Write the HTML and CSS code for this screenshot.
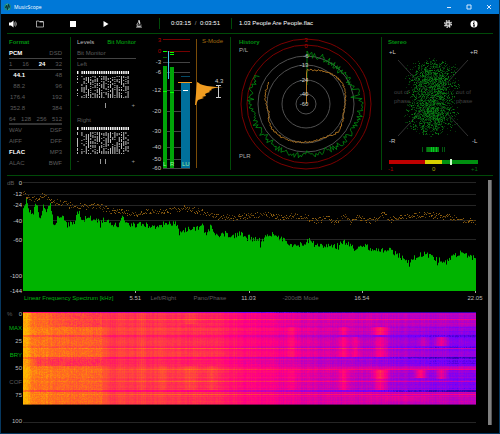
FILE: index.html
```html
<!DOCTYPE html>
<html lang="en">
<head>
  <meta charset="UTF-8" />
  <meta name="viewport" content="width=device-width, initial-scale=1.0" />
  <title>MusicScope</title>
  <link rel="stylesheet" href="styles.css">
</head>
<body>
  <header class="titlebar">
    <svg class="app-icon" width="7" height="8" viewBox="0 0 14 16">
      <circle cx="7" cy="8" r="7" fill="#178a8a"/>
      <path d="M3 10l2-5 2 8 2-10 2 6" fill="none" stroke="#0c2c30" stroke-width="2"/>
      <path d="M5 3l2-1M9 13l2-1" stroke="#8fd08f" stroke-width="1.5"/>
    </svg>
    <span class="app-name">MusicScope</span>
    <button class="win-btn" aria-label="Minimize"><svg width="6" height="6" viewBox="0 0 6 6"><path d="M1 3.5h4"/></svg></button>
    <button class="win-btn" aria-label="Maximize"><svg width="6" height="6" viewBox="0 0 6 6"><path d="M1 1h4v4h-4z"/></svg></button>
    <button class="win-btn" aria-label="Close"><svg width="6" height="6" viewBox="0 0 6 6"><path d="M1 1l4 4M5 1l-4 4"/></svg></button>
  </header>

  <nav class="toolbar">
    <button class="tool first" aria-label="Volume">
      <svg width="8" height="8" viewBox="0 0 16 16"><path d="M0 5h4l5-4v14l-5-4h-4z" fill="#fff"/><path d="M11 5q2 3 0 6M13 3q3.500 5 0 10" fill="none" stroke="#ccc" stroke-width="1.500"/></svg>
    </button>
    <button class="tool" aria-label="Open">
      <svg width="8" height="8" viewBox="0 0 16 16"><path d="M1 14V2h5l1 2h8v10z" fill="none" stroke="#ccc" stroke-width="1.500"/><path d="M7 2h8v2H8z" fill="#ccc"/></svg>
    </button>
    <button class="tool" aria-label="Stop">
      <svg width="8" height="8" viewBox="0 0 16 16"><path d="M2 2h12v12H2z" fill="#fff"/></svg>
    </button>
    <button class="tool" aria-label="Play">
      <svg width="8" height="8" viewBox="0 0 16 16"><path d="M3 2l10 6-10 6z" fill="#fff"/></svg>
    </button>
    <button class="tool" aria-label="Analyze">
      <svg width="8" height="8" viewBox="0 0 16 16"><path d="M6 1l3-1 2 7-3 1zM2 15q0-2 2-2h8q2 0 2 2z" fill="#ddd"/><path d="M6 5q-4 4-1 8h5q3-1 2-4M4 10h6" fill="none" stroke="#ccc" stroke-width="1.500"/></svg>
    </button>
    <div class="time"><span>0:03:15</span><span class="slash">/</span><span>0:03:51</span></div>
    <div class="track">1.03 People Are People.flac</div>
    <button class="tool right" aria-label="Settings">
      <svg width="8" height="8" viewBox="0 0 16 16"><circle cx="8" cy="8" r="6.500" fill="none" stroke="#ddd" stroke-width="3" stroke-dasharray="3 2.100"/><circle cx="8" cy="8" r="4" fill="#666" stroke="#ddd" stroke-width="2.500"/></svg>
    </button>
    <button class="tool right" aria-label="Info">
      <svg width="8" height="8" viewBox="0 0 16 16"><circle cx="8" cy="8" r="7" fill="#fff"/><path d="M8 3v2.500M6 7h2v5M6 12h4" fill="none" stroke="#000" stroke-width="2"/></svg>
    </button>
  </nav>

  <section class="panels">
    <div class="panel format">
      <h2>Format</h2>
      <div class="row ruled"><button class="on">PCM</button><button>DSD</button></div>
      <div class="row ruled"><button>1</button><button>16</button><button class="on">24</button><button>32</button></div>
      <div class="row rate"><button class="on">44.1</button><button>48</button></div>
      <div class="row rate"><button>88.2</button><button>96</button></div>
      <div class="row rate"><button>176.4</button><button>192</button></div>
      <div class="row rate"><button>352.8</button><button>384</button></div>
      <div class="row ruled thick"><button>64</button><button>128</button><button>256</button><button>512</button></div>
      <div class="row"><button>WAV</button><button>DSF</button></div>
      <div class="row"><button>AIFF</button><button>DFF</button></div>
      <div class="row"><button class="on">FLAC</button><button>MP3</button></div>
      <div class="row"><button>ALAC</button><button>BWF</button></div>
    </div>

    <div class="panel levels">
      <div class="tabs"><button>Levels</button><button class="active">Bit Monitor</button></div>
      <div class="row ruled">Bit Monitor</div>
      <div class="row">Left</div>
      <svg class="bits" id="bitsLeft" width="54" height="30" viewBox="0 0 54 30"></svg>
      <div class="row marks"><span>-</span><svg width="12" height="5" viewBox="0 0 12 5"><path d="M6.500 0v5"/></svg><span>+</span></div>
      <div class="row second">Right</div>
      <svg class="bits" id="bitsRight" width="54" height="30" viewBox="0 0 54 30"></svg>
      <div class="row marks"><span>-</span><svg width="12" height="5" viewBox="0 0 12 5"><path d="M1.500 0v5M6.500 0v5"/></svg><span>+</span></div>
    </div>

    <div class="panel meters">
      <svg class="plot" viewBox="0 0 83 138">
        <g class="scale end">
          <text class="red" x="14" y="8">3</text><text class="red" x="14" y="19">0</text>
          <text x="14" y="30">-3</text><text x="14" y="40">-6</text><text x="14" y="58">-12</text><text x="14" y="79">-20</text>
          <text x="14" y="99">-30</text><text x="14" y="115">-40</text><text x="14" y="127">-50</text><text x="14" y="136">-60</text>
        </g>
        <path d="M16 5.500h27M16 17.500h27" stroke="#700"/>
        <path d="M16 28.500h27M16 38.500h27M16 56.500h27M16 77.500h27M16 97.500h27M16 113.500h27M16 125.500h27M16 134.500h27" stroke="#444"/>
        <path d="M16 32h4v102h-4zM23 33h4v101h-4z" fill="#00a408"/>
        <path d="M16 57.500h4M23 58.500h4M16 17.500h4M23 18.500h4M23 20.500h4" stroke="#0f0"/>
        <path d="M16 23.500h4" stroke="#060"/>
        <path d="M21.500 17v28" stroke="#4ac4f0"/>
        <path d="M34 49h9v85h-9z" fill="#00709c"/>
        <path d="M34 42.500h9" stroke="#044a66"/>
        <path d="M31 48.500h14" stroke="#f09a20"/>
        <path d="M36 56.500h5" stroke="#fff"/>
        <g class="foot"><text x="16" y="132">L</text><text x="23" y="132">R</text><text x="35" y="132">LU</text></g>
        <path d="M49.500 5v129" stroke="#7a4c08"/>
        <path d="M50 48l2 1 1 1 3 1 4 1 9 1h7l-8 1-4 1 1 1-3 1 1 1-3 1-2 1 1 2-4 1 2 1-3 1-3 1-1 2-1 3h-1z" fill="#f09c20"/>
        <path d="M69 51.500h5M71.500 51v12M69 63.500h5" stroke="#ccc" fill="none"/>
        <text class="value" x="68" y="49">4.3</text>
      </svg>
      <button class="mode">S-Mode</button>
    </div>

    <div class="panel history">
      <svg class="plot" viewBox="0 0 150 138">
        <g fill="none" stroke="#7c0000"><circle cx="75" cy="69" r="65"/><circle cx="75" cy="69" r="59"/></g>
        <g fill="none" stroke="#505050"><circle cx="75" cy="69" r="48"/><circle cx="75" cy="69" r="39"/><circle cx="75" cy="69" r="24"/><circle cx="75" cy="69" r="10"/></g>
        <path id="peakTrace" fill="none" stroke="#009010"/>
        <path id="loudTrace" fill="none" stroke="#b07420"/>
        <g class="scale mid">
          <text class="red" x="75" y="7">3</text><text class="red" x="75" y="13">0</text>
          <text x="75" y="23">-6</text><text x="73" y="32">-13</text><text x="73" y="47">-24</text><text x="73" y="61">-40</text><text x="73" y="71">-60</text>
        </g>
      </svg>
      <div class="corner"><h2>History</h2><button>P/L</button><button class="low">PLR</button></div>
    </div>

    <div class="panel stereo">
      <h2>Stereo</h2>
      <svg class="plot" viewBox="0 0 111 126">
        <path d="M16 12l70 76M86 12l-70 76" stroke="#333"/>
        <g id="cloud" shape-rendering="crispEdges"></g>
        <g class="scale"><text x="7" y="6">+L</text><text x="88" y="6">+R</text><text x="7" y="95">-R</text><text x="90" y="95">-L</text></g>
        <g class="faint"><text x="12" y="46">out of</text><text x="12" y="55">phase</text><text x="74" y="46">out of</text><text x="74" y="55">phase</text></g>
        <path d="M40.500 99v5M44.500 99v5M60.500 99v5M62.500 99v5" stroke="#005a10"/>
        <path d="M45 99h12v5h-12z" fill="#078010"/><path d="M49.500 99v5M51.500 99v5M54.500 99v5" stroke="#0c2"/>
        <path d="M7 112h36v4h-36z" fill="#c00000"/><path d="M43 112h17v4h-17z" fill="#d8d000"/><path d="M60 112h36v4h-36z" fill="#009010"/>
        <path d="M68 111h2v6h-2z" fill="#cfc"/>
        <text class="red" x="6" y="123">-1</text><text class="yellow" x="50" y="123">0</text><text class="green" x="89" y="123">+1</text>
      </svg>
    </div>
  </section>

  <main class="analysis">
    <div class="charts">
      <section class="spectrum">
        <svg class="axis" width="16" height="114" viewBox="0 0 16 114">
          <text class="dim" x="0" y="5">dB</text>
          <g class="scale end"><text x="15" y="5">0</text><text x="15" y="16">-12</text><text x="15" y="27">-24</text><text x="15" y="43">-40</text><text x="15" y="62">-60</text><text x="15" y="98">-100</text><text x="15" y="113">-144</text></g>
        </svg>
        <div class="field">
          <canvas id="spectrum" height="113"></canvas>
          <div class="freq">
            <button class="active">Linear Frequency Spectrum [kHz]</button><span>5.51</span>
            <button>Left/Right</button><button>Pano/Phase</button><span>11.03</span>
            <button class="db">-200dB Mode</button><span>16.54</span><i></i><span>22.05</span>
          </div>
        </div>
      </section>
      <section class="spectrogram">
        <div class="axis">
          <div class="percent">
            <div class="zero"><span class="dim">%</span><span>0</span></div>
            <button class="active">MAX</button><span>25</span><button class="active">BRY</button><span>50</span><button>COF</button><span>75</span>
          </div>
          <span>100</span>
        </div>
        <div class="field"><canvas id="spectrogram" height="112"></canvas></div>
      </section>
    </div>
    <div class="scrollbar"></div>
  </main>
  <script src="script.js"></script>
</body>
</html>
```

FILE: styles.css
```css
* { box-sizing: border-box; }
body { margin: 0; min-height: 100vh; background-color: #000; color: #bbb; font: 6px/11px "Liberation Sans", Arial, sans-serif; border: 1px solid #07385f; border-top: 0; }
h2 { margin: 0; font-size: 6px; line-height: 11px; color: #009010; }
button { background: none; border: 0; padding: 0; margin: 0; font: inherit; color: #5c5c5c; text-align: left; cursor: pointer; white-space: nowrap; }
svg, canvas { display: block; }
svg text { font-size: 6px; fill: #ccc; }

.titlebar { display: flex; align-items: center; height: 14px; background-color: #0078d7; padding-left: 3px; }
.app-name { flex: 1; margin-left: 3px; color: #fff; font-family: "Open Sans", sans-serif; font-size: 5px; }
.win-btn { width: 20px; display: flex; justify-content: center; }
.win-btn svg { fill: none; stroke: #d8eaff; stroke-width: 1; }

.toolbar { display: flex; align-items: center; height: 20px; margin: 0 6px; padding-right: 6px; border-bottom: 1px solid #004a08; }
.tool { display: flex; justify-content: center; width: 33px; }
.tool.first { width: 16px; justify-content: flex-start; padding-left: 2px; }
.tool.right { width: 26px; }
.time { display: flex; justify-content: space-between; width: 73px; padding: 0 11px; margin-left: 4px; border: 1px solid #004a08; border-width: 0 1px; color: #fff; }
.time .slash { color: #999; }
.track { flex: 1; padding-left: 7px; color: #fff; }

.panels { display: grid; grid-template-columns: 63fr 77fr 83fr 151fr 112fr; height: 142px; margin: 0 6px; padding: 3px 0 5px; border-bottom: 1px solid #004a08; }
.panel { min-width: 0; height: 133px; }
.levels, .history, .stereo { border-left: 1px solid #004a08; }
.row { display: flex; justify-content: space-between; height: 11px; line-height: 11px; color: #5c5c5c; }
.row.ruled { border-bottom: 1px solid #444; }
.row.thick { border-bottom: 2px solid #333; }
.on { color: #fff; font-weight: bold; }
.format { padding: 0 8px 0 2px; }
.format h2, .tabs { height: 11px; }
.format .rate button { width: 16px; text-align: right; }
.levels { padding: 0 11px 0 6px; }
.tabs { display: flex; justify-content: space-between; }
.tabs button { color: #bbb; }
.tabs .active, .active { color: #00b410; }
.marks { width: 58px; align-items: center; color: #999; }
.marks svg { stroke: #999; }
.second { margin-top: 4px; }

.meters, .history { display: grid; }
.plot { width: 100%; grid-area: 1 / 1; overflow: visible; }
.meters .plot { margin-top: -3px; }
.history .plot { margin-top: -2px; }
.mode { grid-area: 1 / 1; justify-self: end; align-self: start; margin-right: 7px; line-height: 9px; color: #a46c10; z-index: 1; }
.corner { grid-area: 1 / 1; display: flex; flex-direction: column; align-items: flex-start; padding-left: 8px; z-index: 1; }
.corner button { color: #aaa; line-height: 5px; }
.corner .low { margin-top: 101px; }
.stereo h2 { padding-left: 6px; }
.scale.end { text-anchor: end; }
.scale.mid { text-anchor: middle; }
svg .foot text { fill: #9df09d; }
svg text.red { fill: #b00000; }
svg text.yellow { fill: #b0a800; }
svg text.green { fill: #007010; }
svg .faint text { fill: #404040; }
svg text.dim, .dim { fill: #5c5c5c; color: #5c5c5c; }

.analysis { display: flex; margin: 4px 7px 4px 6px; gap: 3px; }
.charts { flex: 1; }
.scrollbar { width: 4px; background-color: #808080; border: 1px solid #555; border-width: 0 1px 0 0; }
.spectrum, .spectrogram { display: flex; }
.field { flex: 1; min-width: 0; }
.field canvas { width: calc(100% - 9px); }
.freq { display: grid; grid-template-columns: 102fr 20fr 36fr 57fr 20fr 93fr 20fr 93fr 20fr; line-height: 11px; white-space: nowrap; text-align: center; }
.freq button { text-align: center; }
.freq .active { text-align: left; padding-left: 1px; }
.freq .db { text-align: left; padding-left: 24px; }
.spectrogram { margin-top: 8px; }
.spectrogram .axis { width: 16px; padding-right: 1px; text-align: right; line-height: 8px; margin-top: -2px; }
.percent { display: flex; flex-direction: column; justify-content: space-between; height: 89px; margin-bottom: 18px; }
.percent button { text-align: right; line-height: 8px; }
.zero { display: flex; justify-content: space-between; }
```

FILE: script.js
```js
let seed = 7;
function rnd() {
  seed = (seed * 16807) % 2147483647;
  return seed / 2147483647;
}

// linear interpolation through [x, y] pairs
function curve(pts, x) {
  for (let i = 1; i < pts.length; i++) {
    if (x <= pts[i][0]) {
      const [x0, y0] = pts[i - 1], [x1, y1] = pts[i];
      return y0 + (y1 - y0) * (x - x0) / (x1 - x0);
    }
  }
  return pts[pts.length - 1][1];
}

function drawBits(id) {
  let head = '', body = '';
  for (let c = 0; c < 24; c++) {
    const x = c * 2.2;
    if (c === 1) continue;
    head += `M${x} 1h1.4v3h-1.4z`;
    for (let y = 6; y < 28; y += 1) {
      if (rnd() < (c < 4 ? 0.5 : 0.66)) body += `M${x} ${y}h1v1h-1z`;
    }
  }
  document.getElementById(id).innerHTML = `<path d="${head}" fill="#fff"/><path d="${body}" fill="#bbb"/>`;
}

function trace(id, pts, noise, start) {
  let d = start;
  for (let a = pts[0][0]; a <= 301; a += 1.5) {
    const r = curve(pts, a) + (rnd() - 0.5) * noise;
    const t = a * Math.PI / 180;
    d += `L${(75 + r * Math.sin(t)).toFixed(1)} ${(69 - r * Math.cos(t)).toFixed(1)}`;
  }
  const el = document.getElementById(id);
  el.setAttribute('d', d);
  el.setAttribute('stroke-width', noise > 3 ? 0.8 : 1);
}

function drawCloud() {
  const paths = ['', '', ''];
  for (let i = 0; i < 3400; i++) {
    const g = (rnd() + rnd() + rnd() - 1.5);
    const h = (rnd() + rnd() - 1);
    const lobe = rnd() < 0.5 ? -1 : 1;
    const x = 50 + g * 21;
    const y = 49 + lobe * 17 + h * 23 + lobe * Math.abs(g) * -3;
    paths[i % 3] += `M${Math.round(x)} ${Math.round(y)}h1v1h-1z`;
  }
  document.getElementById('cloud').innerHTML =
    `<path d="${paths[0]}" fill="#03300a"/><path d="${paths[1]}" fill="#05480c"/><path d="${paths[2].slice(0, 7000)}" fill="#087812"/>`;
}

const LEVEL = [[0,28],[3,19],[6,30],[9,31],[13,23],[17,39],[20,25],[24,30],[27,21],[30,43],[34,38],[39,36],[44,44],[52,40],[55,30],[59,41],[62,35],[74,40],[84,39],[94,46],[99,37],[104,42],[111,44],[117,43],[127,45],[132,48],[137,43],[147,41],[152,43],[157,51],[164,48],[171,48],[179,44],[183,54],[187,46],[194,56],[202,48],[207,56],[217,53],[227,57],[236,59],[244,56],[249,53],[257,57],[267,64],[277,63],[286,60],[294,65],[311,66],[322,61],[331,68],[341,65],[354,70],[364,68],[374,74],[386,81],[394,75],[401,72],[411,78],[419,80],[424,81],[431,75],[437,72],[444,75],[453,78]];
const PEAK = [[0,11],[7,18],[14,18],[20,14],[27,19],[34,21],[44,23],[52,26],[64,24],[77,25],[87,30],[101,30],[114,33],[127,30],[144,30],[159,26],[177,31],[194,35],[211,36],[227,34],[247,33],[257,36],[269,34],[284,36],[294,40],[302,35],[311,41],[321,34],[327,42],[334,36],[344,39],[351,38],[359,33],[367,38],[381,35],[394,34],[407,33],[427,36],[441,39],[453,40]];

function drawSpectrum() {
  const cv = document.getElementById('spectrum');
  const w = cv.width = cv.clientWidth;
  const ctx = cv.getContext('2d');
  ctx.fillStyle = '#252525';
  [2, 14, 25, 40, 59].forEach(y => ctx.fillRect(0, y, w, 1));
  for (let x = 0; x < w; x++) {
    const p = x * 453 / w;
    let y = curve(LEVEL, p) + 1 + (rnd() - 0.5) * 6;
    if (rnd() < 0.07) y += 7 * rnd();
    ctx.fillStyle = '#00b400';
    ctx.fillRect(x, y, 1, 111 - y);
    ctx.fillStyle = rnd() < 0.5 ? '#8a5c10' : '#5c3c08';
    ctx.fillRect(x, Math.round(curve(PEAK, p) + 1 + (rnd() - 0.5) * 5), 1, 1);
    if (rnd() < 0.4) ctx.fillRect(x, Math.round(curve(PEAK, p) + 1 + (rnd() - 0.5) * 7), 1, 1);
  }
  ctx.fillStyle = '#aaa';
  [0.25, 0.5, 0.75, 1].forEach(k => ctx.fillRect(Math.round(w * k) - 1, 111, 1, 2));
}

const STOPS = [[0,[50,0,170]],[0.1,[110,0,255]],[0.2,[155,0,220]],[0.33,[210,0,170]],[0.45,[255,0,130]],[0.56,[255,30,95]],[0.68,[255,70,60]],[0.82,[255,115,25]],[1,[255,185,0]]];
function heat(v) {
  v = Math.max(0, Math.min(1, v));
  return [0, 1, 2].map(k => curve(STOPS.map(s => [s[0], s[1][k]]), v));
}

const BASE = [[0,0.97],[4,0.95],[8,0.83],[40,0.77],[76,0.75],[86,0.64],[150,0.61],[190,0.58],[220,0.47],[250,0.42],[300,0.32],[350,0.26],[390,0.19],[453,0.13]];
// [first row, last row, offset]
const BANDS = [[0,0,-0.35],[1,14,-0.01],[15,22,0.03],[23,24,-0.12],[25,33,0],[34,35,-0.06],[36,44,0.02],[45,46,-0.13],[47,53,-0.04],[54,57,0],[58,65,0.04],[66,77,0],[78,79,-0.13],[80,91,0.03]];
// [x, half width, first row, last row, gain]
const SPOTS = [[166,6,1,11,0.08],[166,7,54,77,0.09],[188,5,54,77,0.07],[118,4,1,77,0.04],[140,4,54,77,0.05],[268,4,15,44,0.1],[268,4,58,77,0.06],[320,4,15,22,0.15],[320,5,25,44,0.16],[320,5,58,77,0.16],[332,4,25,44,0.13],[357,7,15,22,0.3],[357,6,25,44,0.18],[357,7,58,66,0.32],[357,6,67,77,0.2],[397,5,58,65,0.28],[418,6,25,33,0.22],[418,5,58,66,0.2],[400,5,25,33,0.1],[380,30,84,88,0.08]];

function drawSpectrogram() {
  const cv = document.getElementById('spectrogram');
  const w = cv.width = cv.clientWidth;
  const ctx = cv.getContext('2d');
  const img = ctx.createImageData(w, 93);
  const cols = [];
  for (let x = 0; x < w; x++) cols.push((rnd() - 0.5) * 0.05 + Math.sin(x / 3) * 0.01);
  for (let y = 0; y < 93; y++) {
    const band = BANDS.find(b => y >= b[0] && y <= b[1]);
    const line = [7, 36, 57, 69, 82].includes(y) ? 0.15 : (rnd() - 0.5) * 0.08;
    for (let x = 0; x < w; x++) {
      const p = x * 453 / w;
      let v = curve(BASE, p) + (band ? band[2] : 0) + cols[x] + line * Math.min(1, p / 200 + 0.15);
      v += (rnd() - 0.5) * (p < 80 ? 0.1 : 0.04);
      if (y < 15) v -= curve([[8, 0], [40, 0.06], [74, 0.1], [88, 0]], Math.max(8, p));
      if (y > 46 && y < 54) v -= curve([[8, 0], [16, 0.12], [74, 0.1], [88, 0]], Math.max(8, p));
      if (y < 15 || (y > 53 && y < 58) || y > 79) v += Math.max(0, p - 280) * 0.0008;
      SPOTS.forEach(s => {
        if (y >= s[2] && y <= s[3]) v += s[4] * Math.max(0, 1 - Math.abs(p - s[0]) / s[1] / 1.5);
      });
      let c = heat(v);
      if (y === 92) c = c.map(n => n * 0.6);
      img.data.set([c[0], c[1], c[2], 255], (y * w + x) * 4);
    }
  }
  ctx.putImageData(img, 0, 0);
  ctx.fillStyle = '#252525';
  ctx.fillRect(0, 110, w, 1);
}

drawBits('bitsLeft');
drawBits('bitsRight');
trace('peakTrace', [[2,50],[20,49],[41,47],[70,50],[80,54],[82,42],[84,54],[110,55],[130,53],[150,51],[180,50],[195,53],[230,52],[250,54],[258,49],[262,55],[301,56]], 7, 'M76 50V16');
trace('loudTrace', [[2,34],[15,35],[38,39],[60,42],[100,38],[130,43],[150,38],[180,38],[215,41],[235,42],[260,38],[285,42],[301,43]], 1.6, 'M75.5 69V38');
drawCloud();
drawSpectrum();
drawSpectrogram();
```
